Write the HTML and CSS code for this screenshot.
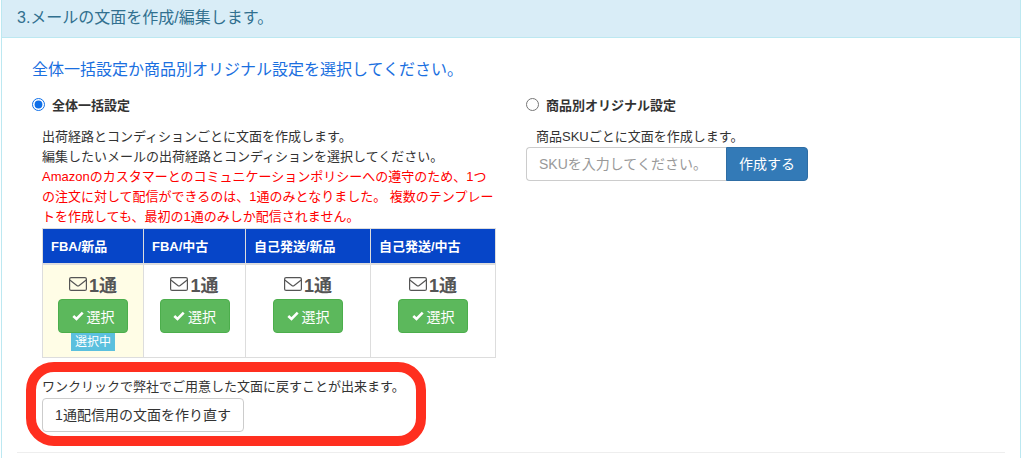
FILE: index.html
```html
<!DOCTYPE html>
<html lang="ja">
<head>
  <meta charset="UTF-8">
  <title>メールの文面</title>
  <link rel="stylesheet" href="styles.css">
</head>
<body>
<div class="panel">
  <div class="panel-head">3.メールの文面を作成/編集します。</div>
  <div class="panel-body">
    <p class="lead">全体一括設定か商品別オリジナル設定を選択してください。</p>
    <div class="cols">
      <div class="col-left">
        <label class="pick"><input type="radio" name="mode" checked><span>全体一括設定</span></label>
        <div class="desc">
          出荷経路とコンディションごとに文面を作成します。<br>
          編集したいメールの出荷経路とコンディションを選択してください。<br>
          <span class="red">Amazonのカスタマーとのコミュニケーションポリシーへの遵守のため、1つの注文に対して配信ができるのは、1通のみとなりました。 複数のテンプレートを作成しても、最初の1通のみしか配信されません。</span>
        </div>
        <table class="mails">
          <colgroup><col class="c1"><col class="c2"><col class="c3"><col class="c4"></colgroup>
          <thead>
            <tr><th>FBA/新品</th><th>FBA/中古</th><th>自己発送/新品</th><th>自己発送/中古</th></tr>
          </thead>
          <tbody>
            <tr>
              <td class="active">
                <div class="count"><svg class="env" viewBox="0 0 18 14"><rect x="0.6" y="0.6" width="16.8" height="12.8" rx="1.5"/><path d="M0.8 3 L7.8 8.4 Q9 9.2 10.2 8.4 L17.2 3"/></svg>1通</div>
                <a class="btn-ok"><svg class="chk" viewBox="0 0 12 10"><path d="M1.3 5 L4.5 8 L10.7 1.6"/></svg>選択</a>
                <div><span class="now">選択中</span></div>
              </td>
              <td>
                <div class="count"><svg class="env" viewBox="0 0 18 14"><rect x="0.6" y="0.6" width="16.8" height="12.8" rx="1.5"/><path d="M0.8 3 L7.8 8.4 Q9 9.2 10.2 8.4 L17.2 3"/></svg>1通</div>
                <a class="btn-ok"><svg class="chk" viewBox="0 0 12 10"><path d="M1.3 5 L4.5 8 L10.7 1.6"/></svg>選択</a>
              </td>
              <td>
                <div class="count"><svg class="env" viewBox="0 0 18 14"><rect x="0.6" y="0.6" width="16.8" height="12.8" rx="1.5"/><path d="M0.8 3 L7.8 8.4 Q9 9.2 10.2 8.4 L17.2 3"/></svg>1通</div>
                <a class="btn-ok"><svg class="chk" viewBox="0 0 12 10"><path d="M1.3 5 L4.5 8 L10.7 1.6"/></svg>選択</a>
              </td>
              <td>
                <div class="count"><svg class="env" viewBox="0 0 18 14"><rect x="0.6" y="0.6" width="16.8" height="12.8" rx="1.5"/><path d="M0.8 3 L7.8 8.4 Q9 9.2 10.2 8.4 L17.2 3"/></svg>1通</div>
                <a class="btn-ok"><svg class="chk" viewBox="0 0 12 10"><path d="M1.3 5 L4.5 8 L10.7 1.6"/></svg>選択</a>
              </td>
            </tr>
          </tbody>
        </table>
        <div class="ring">
          <p>ワンクリックで弊社でご用意した文面に戻すことが出来ます。</p>
          <a class="btn-reset">1通配信用の文面を作り直す</a>
        </div>
      </div>
      <div class="col-right">
        <label class="pick"><input type="radio" name="mode"><span>商品別オリジナル設定</span></label>
        <div class="desc-sku">商品SKUごとに文面を作成します。</div>
        <div class="sku-row">
          <input class="sku" type="text" placeholder="SKUを入力してください。">
          <a class="btn-make">作成する</a>
        </div>
      </div>
    </div>
    <hr class="line">
  </div>
</div>
</body>
</html>
```

FILE: styles.css
```css
*{
    margin: 0;
    padding: 0;
    box-sizing: border-box;
}
html, body{
    height: 458px;
    overflow: hidden;
}
body{
    background: #fff;
    color: #333;
    font-family: "Liberation Sans", "Noto Sans CJK JP", sans-serif;
    font-size: 13px;
}
.panel{
    width: 1020px;
    margin-left: 1px;
    border-left: 1px solid #bce8f1;
    border-right: 1px solid #bce8f1;
}
.panel-head{
    height: 38px;
    line-height: 35px;
    padding-left: 15px;
    background: #d9edf7;
    border-bottom: 1px solid #bce8f1;
    color: #31708f;
    font-size: 16px;
}
.panel-body{
    padding: 0 15px 20px;
}
.lead{
    margin-top: 21px;
    padding-left: 15px;
    line-height: 22px;
    font-size: 16px;
    color: #1a6fe0;
}
.cols{
    display: flex;
    margin-top: 13px;
}
.col-left{
    width: 509px;
    padding-left: 15px;
}
.pick{
    display: flex;
    align-items: center;
    height: 20px;
    font-weight: bold;
    font-size: 13px;
}
.pick input{
    width: 13px;
    height: 13px;
    margin-right: 7px;
    margin-top: 0;
    accent-color: #0f6fe8;
}
.desc{
    margin-top: 13px;
    padding-left: 10px;
    width: 463px;
    line-height: 20px;
}
.red{
    color: #f00;
}
.mails{
    width: 454px;
    margin: 1px 0 0 10px;
    border-collapse: collapse;
    table-layout: fixed;
}
.c1{ width: 101px; }
.c2{ width: 102px; }
.c3{ width: 125px; }
.c4{ width: 125px; }
.mails th{
    height: 35px;
    padding-left: 8px;
    background: #0645c8;
    border: 1px solid #ddd;
    border-bottom-width: 2px;
    color: #fff;
    text-align: left;
    font-size: 13px;
}
.mails th + th{
    border-left-color: #fff;
}
.mails td{
    height: 94px;
    padding-top: 9px;
    border: 1px solid #ddd;
    text-align: center;
    vertical-align: top;
}
.mails td.active{
    background: #fffde6;
}
.count{
    display: flex;
    justify-content: center;
    align-items: center;
    height: 20px;
    color: #555;
    font-size: 18px;
    font-weight: bold;
}
.env{
    width: 18px;
    height: 14px;
    margin-right: 2px;
    fill: none;
    stroke: #555;
    stroke-width: 1.2;
}
.btn-ok{
    display: flex;
    align-items: center;
    justify-content: center;
    width: 70px;
    height: 34px;
    margin: 5px auto 0;
    background: #5cb85c;
    border: 1px solid #4cae4c;
    border-radius: 4px;
    color: #fff;
    font-size: 14px;
}
.chk{
    width: 12px;
    height: 10px;
    margin-right: 3px;
    fill: none;
    stroke: #fff;
    stroke-width: 2.6;
}
.now{
    display: block;
    width: 44px;
    height: 18px;
    margin: 0 auto;
    line-height: 18px;
    background: #5bc0de;
    color: #fff;
    font-size: 12px;
}
.ring{
    width: 400px;
    height: 84px;
    margin: 4px 0 0 -6px;
    padding: 6px 0 0 6px;
    border: 10px solid #ff2f1f;
    border-radius: 28px;
}
.ring p{
    line-height: 18px;
}
.btn-reset{
    display: block;
    width: 202px;
    height: 34px;
    margin-top: 2px;
    line-height: 32px;
    text-align: center;
    background: #fff;
    border: 1px solid #ccc;
    border-radius: 4px;
    font-size: 14px;
}
.col-right{
    width: 400px;
}
.desc-sku{
    margin-top: 13px;
    padding-left: 10px;
    line-height: 20px;
}
.sku-row{
    display: flex;
    height: 34px;
}
.sku{
    width: 200px;
    padding: 0 12px;
    border: 1px solid #ccc;
    border-right: 0;
    border-radius: 4px 0 0 4px;
    font-family: inherit;
    font-size: 14px;
    color: #555;
}
.sku::placeholder{
    color: #999;
}
.btn-make{
    width: 82px;
    line-height: 32px;
    text-align: center;
    background: #337ab7;
    border: 1px solid #2e6da4;
    border-radius: 0 4px 4px 0;
    color: #fff;
    font-size: 14px;
}
.line{
    margin-top: 6px;
    border: 0;
    border-top: 1px solid #eee;
}
```
